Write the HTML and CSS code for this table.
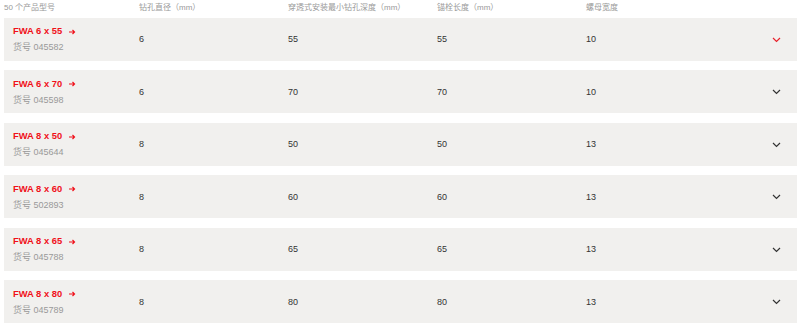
FILE: index.html
```html
<!DOCTYPE html>
<html lang="zh">
<head>
<meta charset="utf-8">
<link rel="stylesheet" href="styles.css">
</head>
<body>
<div class="table">
  <div class="head">
    <div class="c c1">50 个产品型号</div>
    <div class="c c2">钻孔直径（mm）</div>
    <div class="c c3">穿透式安装最小钻孔深度（mm）</div>
    <div class="c c4">锚栓长度（mm）</div>
    <div class="c c5">螺母宽度</div>
  </div>

  <div class="row">
    <div class="c c1"><div class="name">FWA 6 x 55<svg class="arr" width="7" height="6" viewBox="0 0 7 6"><path d="M0 3h5.5M3.5 1l2 2-2 2" fill="none" stroke="currentColor" stroke-width="1.2"/></svg></div><div class="sku">货号 045582</div></div>
    <div class="c c2">6</div><div class="c c3">55</div><div class="c c4">55</div><div class="c c5">10</div>
    <div class="chev red"><svg width="9" height="6" viewBox="0 0 9 6"><path d="M1 1l3.5 3.5L8 1" fill="none" stroke="currentColor" stroke-width="1.2"/></svg></div>
  </div>
  <div class="row">
    <div class="c c1"><div class="name">FWA 6 x 70<svg class="arr" width="7" height="6" viewBox="0 0 7 6"><path d="M0 3h5.5M3.5 1l2 2-2 2" fill="none" stroke="currentColor" stroke-width="1.2"/></svg></div><div class="sku">货号 045598</div></div>
    <div class="c c2">6</div><div class="c c3">70</div><div class="c c4">70</div><div class="c c5">10</div>
    <div class="chev"><svg width="9" height="6" viewBox="0 0 9 6"><path d="M1 1l3.5 3.5L8 1" fill="none" stroke="currentColor" stroke-width="1.2"/></svg></div>
  </div>
  <div class="row">
    <div class="c c1"><div class="name">FWA 8 x 50<svg class="arr" width="7" height="6" viewBox="0 0 7 6"><path d="M0 3h5.5M3.5 1l2 2-2 2" fill="none" stroke="currentColor" stroke-width="1.2"/></svg></div><div class="sku">货号 045644</div></div>
    <div class="c c2">8</div><div class="c c3">50</div><div class="c c4">50</div><div class="c c5">13</div>
    <div class="chev"><svg width="9" height="6" viewBox="0 0 9 6"><path d="M1 1l3.5 3.5L8 1" fill="none" stroke="currentColor" stroke-width="1.2"/></svg></div>
  </div>
  <div class="row">
    <div class="c c1"><div class="name">FWA 8 x 60<svg class="arr" width="7" height="6" viewBox="0 0 7 6"><path d="M0 3h5.5M3.5 1l2 2-2 2" fill="none" stroke="currentColor" stroke-width="1.2"/></svg></div><div class="sku">货号 502893</div></div>
    <div class="c c2">8</div><div class="c c3">60</div><div class="c c4">60</div><div class="c c5">13</div>
    <div class="chev"><svg width="9" height="6" viewBox="0 0 9 6"><path d="M1 1l3.5 3.5L8 1" fill="none" stroke="currentColor" stroke-width="1.2"/></svg></div>
  </div>
  <div class="row">
    <div class="c c1"><div class="name">FWA 8 x 65<svg class="arr" width="7" height="6" viewBox="0 0 7 6"><path d="M0 3h5.5M3.5 1l2 2-2 2" fill="none" stroke="currentColor" stroke-width="1.2"/></svg></div><div class="sku">货号 045788</div></div>
    <div class="c c2">8</div><div class="c c3">65</div><div class="c c4">65</div><div class="c c5">13</div>
    <div class="chev"><svg width="9" height="6" viewBox="0 0 9 6"><path d="M1 1l3.5 3.5L8 1" fill="none" stroke="currentColor" stroke-width="1.2"/></svg></div>
  </div>
  <div class="row">
    <div class="c c1"><div class="name">FWA 8 x 80<svg class="arr" width="7" height="6" viewBox="0 0 7 6"><path d="M0 3h5.5M3.5 1l2 2-2 2" fill="none" stroke="currentColor" stroke-width="1.2"/></svg></div><div class="sku">货号 045789</div></div>
    <div class="c c2">8</div><div class="c c3">80</div><div class="c c4">80</div><div class="c c5">13</div>
    <div class="chev"><svg width="9" height="6" viewBox="0 0 9 6"><path d="M1 1l3.5 3.5L8 1" fill="none" stroke="currentColor" stroke-width="1.2"/></svg></div>
  </div>
</div>
</body>
</html>
```
FILE: styles.css
```css
* { box-sizing: border-box; }
html, body { margin: 0; padding: 0; background: #fff; }
body {
  font-family: "Liberation Sans", Arial, "Noto Sans CJK SC", sans-serif;
  color: #333;
  overflow: hidden;
}
.table {
  padding: 0 3px 0 4px;
  display: flex;
  flex-direction: column;
  gap: 9.6px;
}
.head, .row {
  display: grid;
  grid-template-columns: 135px 149px 149px 149px 1fr 40px;
  align-items: center;
}
.head {
  height: 17.5px;
  margin-bottom: -9.6px;
  font-size: 8px;
  color: #999;
  padding-bottom: 5px;
}
.row {
  background: #f1f0ee;
  height: 43px;
  font-size: 9px;
  color: #333;
}
.row .c1 { padding-left: 9px; }
.name {
  color: #f0101a;
  font-weight: bold;
  font-size: 9.4px;
  line-height: 12px;
  display: flex;
  align-items: center;
}
.arr { display: block; margin-left: 7px; margin-top: 1px; }
.sku {
  color: #999;
  font-size: 9px;
  margin-top: 4px;
  line-height: 12px;
}
.chev {
  display: flex;
  justify-content: center;
  color: #333;
  padding-right: 2px;
  padding-top: 1px;
}
.chev.red { color: #e8202a; }
.chev svg { display: block; }
```
